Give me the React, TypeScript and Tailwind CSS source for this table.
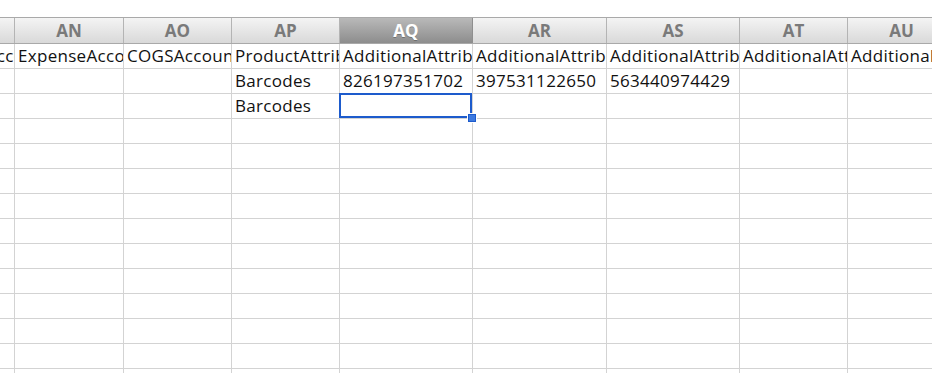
import React from "react";

type Col = { key: string; width: number };

const columns: Col[] = [
  { key: "AM", width: 108 },
  { key: "AN", width: 109 },
  { key: "AO", width: 108 },
  { key: "AP", width: 108 },
  { key: "AQ", width: 133 },
  { key: "AR", width: 134 },
  { key: "AS", width: 133 },
  { key: "AT", width: 108 },
  { key: "AU", width: 108 },
];

const rows: Record<string, string>[] = [
  {
    AM: "PurchaseAccount",
    AN: "ExpenseAccount",
    AO: "COGSAccount",
    AP: "ProductAttribute",
    AQ: "AdditionalAttribute1",
    AR: "AdditionalAttribute2",
    AS: "AdditionalAttribute3",
    AT: "AdditionalAttribute4",
    AU: "AdditionalAttribute5",
  },
  { AP: "Barcodes", AQ: "826197351702", AR: "397531122650", AS: "563440974429" },
  { AP: "Barcodes" },
  ...Array.from({ length: 11 }, () => ({})),
];

const activeCol = "AQ";
const activeRow = 2;

function HeaderCell({ col }: { col: Col }) {
  const active = col.key === activeCol;
  return (
    <div
      style={{ width: col.width }}
      className={
        active
          ? "shrink-0 h-full flex items-center justify-center border-r border-[#8f8f8f] bg-gradient-to-b from-[#b9b9b9] to-[#8d8d8d] text-white font-bold text-[17px] [text-shadow:0_1px_0_rgba(0,0,0,0.25)]"
          : "shrink-0 h-full flex items-center justify-center border-r border-[#b4b4b4] bg-gradient-to-b from-[#f4f4f4] to-[#d9d9d9] text-[#7a7a7a] font-bold text-[17px]"
      }
    >
      {col.key}
    </div>
  );
}

function Cell({ col, value, selected }: { col: Col; value?: string; selected: boolean }) {
  return (
    <div
      style={{ width: col.width }}
      className="relative shrink-0 h-full border-r border-[#d3d3d3] overflow-visible"
    >
      <div className="h-full overflow-hidden whitespace-nowrap pl-[3px] text-[17px] tracking-[0.3px] leading-[24px] text-[#111]">
        {value}
      </div>
      {selected && (
        <>
          <div className="absolute -left-[1px] -top-[1px] -right-0 -bottom-0 border-2 border-[#1d5bcc] pointer-events-none" />
          <div className="absolute -right-[4px] -bottom-[4px] w-[8px] h-[8px] bg-[#3d7ae0] border border-[#1d5bcc] outline outline-1 outline-white z-10" />
        </>
      )}
    </div>
  );
}

export default function App() {
  return (
    <div className="w-[932px] h-[373px] overflow-hidden bg-white pt-[17px] font-['Open_Sans',sans-serif]">
      <div className="-ml-[93px] w-max">
        <div className="flex h-[27px] border-t border-b border-[#a9a9a9]">
          {columns.map((c) => (
            <HeaderCell key={c.key} col={c} />
          ))}
        </div>
        {rows.map((r, i) => (
          <div key={i} className="flex h-[25px] border-b border-[#d3d3d3]">
            {columns.map((c) => (
              <Cell
                key={c.key}
                col={c}
                value={r[c.key]}
                selected={i === activeRow && c.key === activeCol}
              />
            ))}
          </div>
        ))}
      </div>
    </div>
  );
}
